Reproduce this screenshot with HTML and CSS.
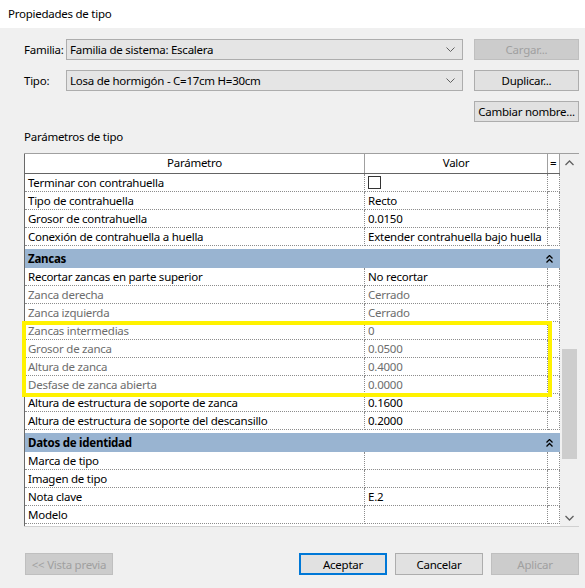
FILE: index.html
```html
<!DOCTYPE html>
<html>
<head>
<meta charset="utf-8">
<link rel="stylesheet" href="styles.css">
</head>
<body>
<div class="titlebar">Propiedades de tipo</div>
<div class="dialog">
  <div class="form">
    <span class="lbl">Familia:</span>
    <div class="combo"><span>Familia de sistema: Escalera</span><svg class="chev" width="9" height="6" viewBox="0 0 9 6"><path d="M0.5 0.5 L4.5 4.5 L8.5 0.5" fill="none" stroke="#606060" stroke-width="1"/></svg></div>
    <button class="btn disabled">Cargar...</button>
    <span class="lbl">Tipo:</span>
    <div class="combo"><span>Losa de hormigón - C=17cm H=30cm</span><svg class="chev" width="9" height="6" viewBox="0 0 9 6"><path d="M0.5 0.5 L4.5 4.5 L8.5 0.5" fill="none" stroke="#606060" stroke-width="1"/></svg></div>
    <button class="btn">Duplicar...</button>
    <span></span>
    <span></span>
    <button class="btn">Cambiar nombre...</button>
  </div>

  <div class="section-label">Parámetros de tipo</div>

  <div class="frame">
    <div class="table">
      <div class="hdr"><div class="h1">Parámetro</div><div class="h2">Valor</div><div class="h3">=</div></div>
      <div class="row"><div class="c1">Terminar con contrahuella</div><div class="c2"><span class="chk"></span></div><div class="c3"></div></div>
      <div class="row"><div class="c1">Tipo de contrahuella</div><div class="c2">Recto</div><div class="c3"></div></div>
      <div class="row"><div class="c1">Grosor de contrahuella</div><div class="c2">0.0150</div><div class="c3"></div></div>
      <div class="row"><div class="c1">Conexión de contrahuella a huella</div><div class="c2">Extender contrahuella bajo huella</div><div class="c3"></div></div>
      <div class="group"><span>Zancas</span><svg class="dchev" width="7" height="8" viewBox="0 0 7 8"><path d="M0.5 3.5 L3.5 0.5 L6.5 3.5 M0.5 7.5 L3.5 4.5 L6.5 7.5" fill="none" stroke="#000" stroke-width="1.3"/></svg></div>
      <div class="row"><div class="c1">Recortar zancas en parte superior</div><div class="c2">No recortar</div><div class="c3"></div></div>
      <div class="row dim"><div class="c1">Zanca derecha</div><div class="c2">Cerrado</div><div class="c3"></div></div>
      <div class="row dim"><div class="c1">Zanca izquierda</div><div class="c2">Cerrado</div><div class="c3"></div></div>
      <div class="row dim"><div class="c1">Zancas intermedias</div><div class="c2">0</div><div class="c3"></div></div>
      <div class="row dim"><div class="c1">Grosor de zanca</div><div class="c2">0.0500</div><div class="c3"></div></div>
      <div class="row dim"><div class="c1">Altura de zanca</div><div class="c2">0.4000</div><div class="c3"></div></div>
      <div class="row dim"><div class="c1">Desfase de zanca abierta</div><div class="c2">0.0000</div><div class="c3"></div></div>
      <div class="row"><div class="c1">Altura de estructura de soporte de zanca</div><div class="c2">0.1600</div><div class="c3"></div></div>
      <div class="row"><div class="c1">Altura de estructura de soporte del descansillo</div><div class="c2">0.2000</div><div class="c3"></div></div>
      <div class="group"><span>Datos de identidad</span><svg class="dchev" width="7" height="8" viewBox="0 0 7 8"><path d="M0.5 3.5 L3.5 0.5 L6.5 3.5 M0.5 7.5 L3.5 4.5 L6.5 7.5" fill="none" stroke="#000" stroke-width="1.3"/></svg></div>
      <div class="row"><div class="c1">Marca de tipo</div><div class="c2"></div><div class="c3"></div></div>
      <div class="row"><div class="c1">Imagen de tipo</div><div class="c2"></div><div class="c3"></div></div>
      <div class="row"><div class="c1">Nota clave</div><div class="c2">E.2</div><div class="c3"></div></div>
      <div class="row"><div class="c1">Modelo</div><div class="c2"></div><div class="c3"></div></div>
    </div>
    <div class="scrollbar">
      <svg class="arrow" width="9" height="6" viewBox="0 0 9 6"><path d="M0.5 5 L4.5 1 L8.5 5" fill="none" stroke="#606060" stroke-width="1.3"/></svg>
      <div class="track"><div class="thumb"></div></div>
      <svg class="arrow" width="9" height="6" viewBox="0 0 9 6"><path d="M0.5 1 L4.5 5 L8.5 1" fill="none" stroke="#606060" stroke-width="1.3"/></svg>
    </div>
  </div>

  <div class="footer">
    <button class="btn disabled wide">&lt;&lt; Vista previa</button>
    <div class="actions">
      <button class="btn default wide">Aceptar</button>
      <button class="btn wide">Cancelar</button>
      <button class="btn disabled wide">Aplicar</button>
    </div>
  </div>

  <div class="highlight"></div>
</div>
</body>
</html>
```
FILE: styles.css
```css
* { box-sizing: border-box; }
html, body { margin: 0; padding: 0; }
body {
  width: 585px;
  height: 588px;
  overflow: hidden;
  background: #f0f0f0;
  font-family: "Noto Sans", "Liberation Sans", sans-serif;
  font-size: 11.5px;
  letter-spacing: -0.25px;
  color: #000;
}
.titlebar {
  height: 28px;
  background: #fff;
  padding-left: 8px;
  line-height: 28px;
}
.dialog {
  position: relative;
  padding-top: 11px;
}
.form {
  margin-left: 24px;
  display: grid;
  grid-template-columns: 42px 408px 105px;
  grid-template-rows: 21px 21px 21px;
  row-gap: 10px;
}
.form .combo { margin-right: 11px; }
.lbl {
  align-self: center;
  line-height: 16px;
  white-space: nowrap;
}
.combo {
  display: flex;
  align-items: center;
  justify-content: space-between;
  background: #e5e5e5;
  border: 1px solid #adadad;
  padding: 0 7px 0 3px;
  height: 21px;
  white-space: nowrap;
}
.chev { display: block; }
.btn {
  font-family: inherit;
  font-size: 11.5px;
  letter-spacing: -0.25px;
  height: 21px;
  background: #e1e1e1;
  border: 1px solid #adadad;
  color: #000;
  padding: 0;
  margin: 0;
  white-space: nowrap;
}
.btn.disabled {
  background: #cccccc;
  border-color: #bfbfbf;
  color: #a0a0a0;
}
.btn.default {
  border: 2px solid #0078d7;
}
.section-label {
  margin: 7px 0 0 24px;
  line-height: 16px;
  height: 16px;
}
.frame {
  margin: 8px 0 0 24px;
  width: 555px;
  height: 374px;
  display: flex;
  border-top: 1px solid #a0a0a0;
  border-bottom: 1px solid #d0d0d0;
  background: #f0f0f0;
}
.table {
  width: 536px;
  background: #fff;
  border-left: 1px solid #696969;
  overflow: hidden;
}
.hdr {
  display: grid;
  grid-template-columns: 340px 183px 12px;
  height: 20px;
  border-bottom: 1px solid #646464;
  line-height: 18px;
  text-align: center;
}
.h1, .h2, .h3 { border-right: 1px solid #a0a0a0; }
.h3 { text-align: left; padding-left: 2px; }
.row {
  display: grid;
  grid-template-columns: 340px 183px 12px;
  height: 18px;
  line-height: 17px;
  white-space: nowrap;
}
.row > div {
  border-right: 1px dotted #8c8c8c;
  border-bottom: 1px dotted #8c8c8c;
  padding-left: 3px;
  overflow: hidden;
}
.row .c3 { padding: 0; }
.row.dim { color: #6d6d6d; }
.chk {
  display: inline-block;
  width: 13px;
  height: 13px;
  border: 1px solid #333;
  background: #fff;
  vertical-align: middle;
  margin-top: -2px;
}
.group {
  margin-top: 3px;
  height: 19px;
  background: #99b4d1;
  font-weight: bold;
  line-height: 19px;
  padding-left: 3px;
  display: flex;
  align-items: center;
  justify-content: space-between;
  padding-right: 7px;
}
.dchev { display: block; }
.scrollbar {
  width: 19px;
  display: flex;
  flex-direction: column;
  align-items: center;
  padding: 6px 0 5px;
}
.arrow { display: block; }
.track {
  flex: 1;
  width: 100%;
  position: relative;
}
.thumb {
  position: absolute;
  left: 2px;
  right: 2px;
  top: 183px;
  height: 110px;
  background: #cdcdcd;
}
.footer {
  margin: 26px 0 0 25px;
  width: 554px;
  display: flex;
  justify-content: space-between;
}
.btn.wide { width: 88px; height: 22px; }
.actions {
  display: flex;
  gap: 8px;
}
.highlight {
  position: absolute;
  left: 22px;
  top: 293px;
  width: 530px;
  height: 76px;
  border: 4px solid #fff200;
  pointer-events: none;
}
```
